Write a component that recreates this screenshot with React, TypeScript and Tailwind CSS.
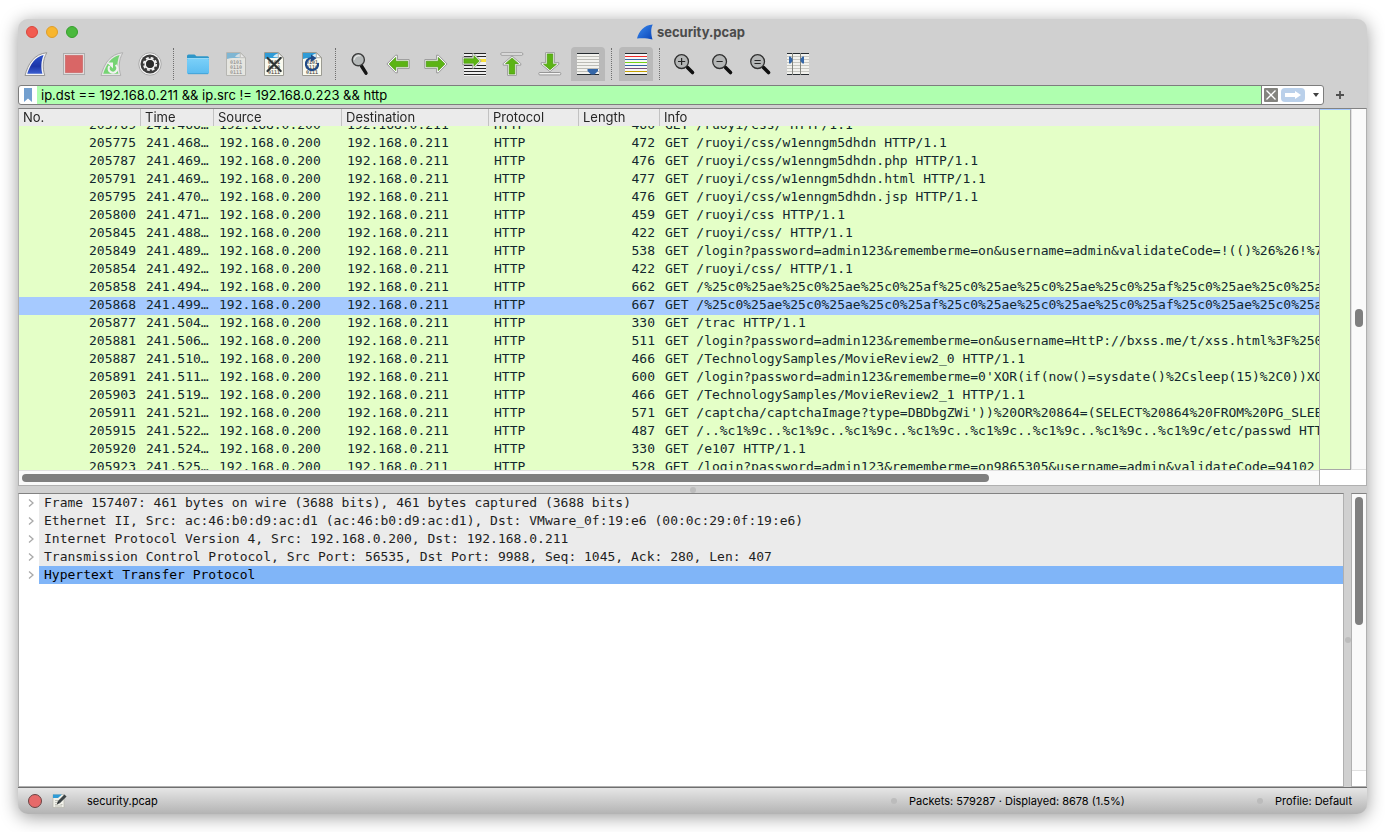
import { useLayoutEffect, useRef, useState } from "react";
import type { ReactNode } from "react";
import clsx from "clsx";

type Packet = {
  no: number;
  time: string;
  length: number;
  info: string;
};

const SRC = "192.168.0.200";
const DST = "192.168.0.211";

const packets: Packet[] = [
  { no: 205769, time: "241.466…", length: 460, info: "GET /ruoyi/css/ HTTP/1.1" },
  { no: 205775, time: "241.468…", length: 472, info: "GET /ruoyi/css/w1enngm5dhdn HTTP/1.1" },
  { no: 205787, time: "241.469…", length: 476, info: "GET /ruoyi/css/w1enngm5dhdn.php HTTP/1.1" },
  { no: 205791, time: "241.469…", length: 477, info: "GET /ruoyi/css/w1enngm5dhdn.html HTTP/1.1" },
  { no: 205795, time: "241.470…", length: 476, info: "GET /ruoyi/css/w1enngm5dhdn.jsp HTTP/1.1" },
  { no: 205800, time: "241.471…", length: 459, info: "GET /ruoyi/css HTTP/1.1" },
  { no: 205845, time: "241.488…", length: 422, info: "GET /ruoyi/css/ HTTP/1.1" },
  {
    no: 205849,
    time: "241.489…",
    length: 538,
    info: "GET /login?password=admin123&rememberme=on&username=admin&validateCode=!(()%26%26!%7C",
  },
  { no: 205854, time: "241.492…", length: 422, info: "GET /ruoyi/css/ HTTP/1.1" },
  {
    no: 205858,
    time: "241.494…",
    length: 662,
    info: "GET /%25c0%25ae%25c0%25ae%25c0%25af%25c0%25ae%25c0%25ae%25c0%25af%25c0%25ae%25c0%25ae",
  },
  {
    no: 205868,
    time: "241.499…",
    length: 667,
    info: "GET /%25c0%25ae%25c0%25ae%25c0%25af%25c0%25ae%25c0%25ae%25c0%25af%25c0%25ae%25c0%25ae",
  },
  { no: 205877, time: "241.504…", length: 330, info: "GET /trac HTTP/1.1" },
  {
    no: 205881,
    time: "241.506…",
    length: 511,
    info: "GET /login?password=admin123&rememberme=on&username=HttP://bxss.me/t/xss.html%3F%2500",
  },
  { no: 205887, time: "241.510…", length: 466, info: "GET /TechnologySamples/MovieReview2_0 HTTP/1.1" },
  {
    no: 205891,
    time: "241.511…",
    length: 600,
    info: "GET /login?password=admin123&rememberme=0'XOR(if(now()=sysdate()%2Csleep(15)%2C0))XOR",
  },
  { no: 205903, time: "241.519…", length: 466, info: "GET /TechnologySamples/MovieReview2_1 HTTP/1.1" },
  {
    no: 205911,
    time: "241.521…",
    length: 571,
    info: "GET /captcha/captchaImage?type=DBDbgZWi'))%20OR%20864=(SELECT%20864%20FROM%20PG_SLEEP",
  },
  {
    no: 205915,
    time: "241.522…",
    length: 487,
    info: "GET /..%c1%9c..%c1%9c..%c1%9c..%c1%9c..%c1%9c..%c1%9c..%c1%9c..%c1%9c/etc/passwd HTTP/1.1",
  },
  { no: 205920, time: "241.524…", length: 330, info: "GET /e107 HTTP/1.1" },
  {
    no: 205923,
    time: "241.525…",
    length: 528,
    info: "GET /login?password=admin123&rememberme=on9865305&username=admin&validateCode=94102",
  },
];

const columns = [
  { label: "No.", width: "w-[122px]" },
  { label: "Time", width: "w-[73px]" },
  { label: "Source", width: "w-[128px]" },
  { label: "Destination", width: "w-[147px]" },
  { label: "Protocol", width: "w-[90px]" },
  { label: "Length", width: "w-[81px]" },
  { label: "Info", width: "" },
];

const layers = [
  "Frame 157407: 461 bytes on wire (3688 bits), 461 bytes captured (3688 bits)",
  "Ethernet II, Src: ac:46:b0:d9:ac:d1 (ac:46:b0:d9:ac:d1), Dst: VMware_0f:19:e6 (00:0c:29:0f:19:e6)",
  "Internet Protocol Version 4, Src: 192.168.0.200, Dst: 192.168.0.211",
  "Transmission Control Protocol, Src Port: 56535, Dst Port: 9988, Seq: 1045, Ack: 280, Len: 407",
  "Hypertext Transfer Protocol",
];

const FIN = "M1 23.5C4 12 10 2 22.8 0.7C18.6 8 18.4 16 20.8 23.5Z";
const FIN_INNER = "M3.2 21.7C6.5 12 11 5 19.6 3C17 9 16.8 16 18.4 21.7Z";

function Icon({ children }: { children: ReactNode }) {
  return (
    <svg viewBox="0 0 24 24" className="size-6 shrink-0" aria-hidden="true">
      {children}
    </svg>
  );
}

function StartIcon() {
  return (
    <Icon>
      <defs>
        <linearGradient id="fin" x1="0" y1="0" x2="0" y2="1">
          <stop offset="0" stopColor="#2a50cc" />
          <stop offset="0.6" stopColor="#1c35a8" />
          <stop offset="1" stopColor="#3a5ed0" />
        </linearGradient>
      </defs>
      <path d={FIN} fill="#f4f4f4" stroke="#8e8e8e" strokeWidth="0.9" />
      <path d={FIN_INNER} fill="url(#fin)" />
    </Icon>
  );
}

function StopIcon() {
  return (
    <Icon>
      <rect x="1.5" y="1.5" width="21" height="21" fill="#e2dcdc" stroke="#adadad" />
      <rect x="3.5" y="3.5" width="17" height="17" fill="#d96666" stroke="#c65a5a" strokeWidth="0.6" />
    </Icon>
  );
}

function RestartIcon() {
  return (
    <Icon>
      <path d={FIN} fill="#e6e6e6" stroke="#adadad" strokeWidth="0.9" />
      <path d={FIN_INNER} fill="#76d474" />
      <path d="M9.4 14A4.3 4.3 0 1 0 15.6 13" fill="none" stroke="#f2f2f2" strokeWidth="2.2" />
      <path d="M6.8 10.5H13V16.5Z" fill="#f2f2f2" />
    </Icon>
  );
}

function OptionsIcon() {
  return (
    <Icon>
      <circle cx="12" cy="12" r="11.2" fill="#f5f5f5" stroke="#9a9a9a" strokeWidth="0.8" />
      <circle cx="12" cy="12" r="9.5" fill="#3b3b3b" />
      <circle cx="12" cy="12" r="6.2" fill="none" stroke="#f5f5f5" strokeWidth="1.8" strokeDasharray="2.8 2.07" />
      <circle cx="12" cy="12" r="4.7" fill="none" stroke="#f5f5f5" strokeWidth="1.8" />
      <circle cx="12" cy="12" r="3.9" fill="#2b2b2b" />
    </Icon>
  );
}

function FolderIcon() {
  return (
    <Icon>
      <defs>
        <linearGradient id="folder" x1="0" y1="0" x2="0" y2="1">
          <stop offset="0" stopColor="#7bd0f9" />
          <stop offset="1" stopColor="#5bbcf0" />
        </linearGradient>
      </defs>
      <path d="M1 4a1.5 1.5 0 0 1 1.5-1.500H8.500l2 1.800H21.500A1.500 1.500 0 0 1 23 5.800V9H1Z" fill="#2e96c8" />
      <rect x="1" y="6.5" width="22" height="15.5" rx="1.5" fill="url(#folder)" />
      <path d="M1 6.5H23" stroke="#a8e2fc" strokeWidth="0.8" />
      <path d="M2 21.7H22" stroke="#3f9fd4" strokeWidth="0.9" />
    </Icon>
  );
}

function Doc({ faded, children }: { faded?: boolean; children?: ReactNode }) {
  return (
    <Icon>
      <g opacity={faded ? 0.5 : 1}>
        <path d="M2.500 0.5H16.5L21.500 5.500V23.500H2.500Z" fill="#fafaef" stroke="#9b9b93" />
        <path d="M3 1H16V6H9Q6 6 3 7Z" fill="#2f9bd6" />
        <path d="M11 5C12 3 14 2 16 1.5V5.5Z" fill="#d4ecf8" />
        <path d="M16.3 0.8V5.7H21.2Z" fill="#fff" stroke="#9b9b93" strokeWidth="0.8" />
        <g fontFamily="DejaVu Sans Mono, monospace" fontSize="5" fontWeight="bold" fill="#66665f">
          <text x="6" y="12">0101</text>
          <text x="6" y="17">0110</text>
          <text x="6" y="22">0111</text>
        </g>
      </g>
      {children}
    </Icon>
  );
}

function FindIcon() {
  return (
    <Icon>
      <path d="M13.5 14L18 21.2" stroke="#151515" strokeWidth="3.4" strokeLinecap="round" />
      <circle cx="10.3" cy="7.7" r="6.1" fill="#b4b8b8" stroke="#3a3a3a" strokeWidth="1.4" />
      <path d="M6.3 7.7A4.3 4.3 0 0 1 12.500 4" fill="none" stroke="#e8e8e8" strokeWidth="1.2" />
    </Icon>
  );
}

function Arrow({ turn }: { turn: number }) {
  return (
    <g transform={`rotate(${turn} 12 12)`}>
      <path
        d="M0.9 12L9.6 3.2H11.4V7.6H23.2V16.4H11.4V20.8H9.6Z"
        fill="#f8f8f8"
        stroke="#8f8f8f"
        strokeWidth="0.9"
        strokeLinejoin="round"
      />
      <path d="M3.1 12L9.700 5.500V9.200H21.700V14.800H9.700V18.500Z" fill="#5cb414" stroke="#429405" strokeWidth="0.7" />
    </g>
  );
}

function BackIcon() {
  return <Icon><Arrow turn={0} /></Icon>;
}

function ForwardIcon() {
  return <Icon><Arrow turn={180} /></Icon>;
}

function GotoIcon() {
  return (
    <Icon>
      <rect x="2" y="1" width="22" height="23" fill="#f0f0f0" />
      <rect x="17" y="7" width="7" height="3" fill="#f8e03c" />
      <g fill="#252525">
        <rect x="2" y="1" width="22" height="1" />
        <rect x="2" y="4" width="22" height="1" />
        <rect x="2" y="13" width="22" height="1" />
        <rect x="2" y="16" width="22" height="1" />
        <rect x="2" y="19" width="22" height="1" />
        <rect x="2" y="22" width="22" height="1" />
      </g>
      <g transform="translate(0 -1) scale(0.83)">
        <Arrow turn={180} />
      </g>
    </Icon>
  );
}

function FirstIcon() {
  return (
    <Icon>
      <rect x="0.8" y="0.8" width="22" height="2.4" rx="1" fill="#f4f4f4" stroke="#8f8f8f" strokeWidth="0.9" />
      <g transform="translate(0 3.2) scale(1 0.87)">
        <Arrow turn={90} />
      </g>
    </Icon>
  );
}

function LastIcon() {
  return (
    <Icon>
      <rect x="0.8" y="20.5" width="22" height="2.4" rx="1" fill="#f4f4f4" stroke="#8f8f8f" strokeWidth="0.9" />
      <g transform="translate(0 0) scale(1 0.85)">
        <Arrow turn={270} />
      </g>
    </Icon>
  );
}

function AutoScrollIcon() {
  return (
    <Icon>
      <rect x="1" y="1" width="22" height="22" fill="#f2f2ee" />
      <g fill="#bcbcb6">
        <rect x="1" y="4" width="22" height="1" />
        <rect x="1" y="7" width="22" height="1" />
        <rect x="1" y="10" width="22" height="1" />
        <rect x="1" y="13" width="22" height="1" />
        <rect x="1" y="16" width="22" height="1" />
        <rect x="1" y="19" width="22" height="1" />
      </g>
      <path d="M1 1.5H23M1 22.5H23" stroke="#252b30" />
      <path d="M11.5 17H22V19L18.500 22.500H15L11.500 19Z" fill="#3567a8" />
    </Icon>
  );
}

function ColorizeIcon() {
  const lines = ["#252b30", "#ef2929", "#3465a4", "#73d216", "#3465a4", "#75507b", "#c4a000", "#252b30"];
  return (
    <Icon>
      <rect x="1" y="1" width="22" height="22" fill="#f7f7f7" />
      {lines.map((c, i) => (
        <rect key={i} x="1" y={1 + i * 3} width="22" height="1" fill={c} />
      ))}
    </Icon>
  );
}

function ZoomIcon({ sign }: { sign: "in" | "out" | "reset" }) {
  return (
    <Icon>
      <path d="M15.5 15.500L20.500 20.500" stroke="#101010" strokeWidth="3.6" strokeLinecap="round" />
      <circle cx="9.6" cy="9.6" r="6.9" fill="#b4b6b6" stroke="#303030" strokeWidth="1.3" />
      <g stroke="#252525" strokeWidth="1.2">
        {sign === "in" && <path d="M6 9.5H13.200M9.600 6V13" />}
        {sign === "out" && <path d="M6.500 9.500H12.700" />}
        {sign === "reset" && <path d="M6.500 8.500H12.700M6.500 11.500H12.700" />}
      </g>
    </Icon>
  );
}

function ResizeColumnsIcon() {
  return (
    <Icon>
      <rect x="1" y="1" width="22" height="22" fill="#f2f2ee" />
      <g fill="#c6c6c0">
        <rect x="1" y="4" width="22" height="1" />
        <rect x="1" y="7" width="22" height="1" />
        <rect x="1" y="10" width="22" height="1" />
        <rect x="1" y="13" width="22" height="1" />
        <rect x="1" y="16" width="22" height="1" />
        <rect x="1" y="19" width="22" height="1" />
      </g>
      <path d="M1 1.5H23M1 22.5H23" stroke="#252b30" />
      <path d="M6.500 1V23M14.500 1V23" stroke="#83857f" />
      <path d="M3 4.5H4.500L6.500 7V9L4.500 11.500H3ZM18 4.500H16.500L14.500 7V9L16.500 11.500H18Z" fill="#3567a8" />
    </Icon>
  );
}

function ToolButton({ label, active, children }: { label: string; active?: boolean; children: ReactNode }) {
  return (
    <button
      type="button"
      aria-label={label}
      title={label}
      className={clsx(
        "flex size-[34px] shrink-0 items-center justify-center rounded-t",
        active && "bg-[#b9b9b9]",
      )}
    >
      {children}
    </button>
  );
}

function Separator() {
  return (
    <div className="w-[6px] shrink-0 pl-[2px]">
      <div className="h-8 border-l border-dotted border-[#6f6f6f]" />
    </div>
  );
}

function TitleBar() {
  return (
    <div className="grid h-[25px] shrink-0 grid-cols-[1fr_auto_1fr] items-center">
      <div className="flex gap-2 pl-2">
        <button type="button" aria-label="Close" className="size-3 rounded-full border border-[#d9473c] bg-[#f25c51]" />
        <button type="button" aria-label="Minimize" className="size-3 rounded-full border border-[#dd9d2b] bg-[#f8b62f]" />
        <button type="button" aria-label="Zoom" className="size-3 rounded-full border border-[#379e2e] bg-[#4ab93d]" />
      </div>
      <h1 className="flex items-center gap-1 pr-[3px] text-[13px] leading-4 font-bold text-[#4b4b4b]">
        <svg viewBox="0 0 16 16" className="size-4" aria-hidden="true">
          <defs>
            <linearGradient id="title-fin" x1="0" y1="0" x2="1" y2="1">
              <stop offset="0" stopColor="#3b8cf0" />
              <stop offset="1" stopColor="#0b45b8" />
            </linearGradient>
          </defs>
          <path d="M0 14.5C2 7 7 1 15.8 0.5C13.5 4.500 14 10 15.500 15.500C10 14 5 14 0 14.500Z" fill="url(#title-fin)" />
        </svg>
        security.pcap
      </h1>
    </div>
  );
}

function Toolbar() {
  return (
    <div className="flex h-[40px] shrink-0 items-center gap-1 px-px" role="toolbar" aria-label="Main toolbar">
      <ToolButton label="Start capture"><StartIcon /></ToolButton>
      <ToolButton label="Stop capture"><StopIcon /></ToolButton>
      <ToolButton label="Restart capture"><RestartIcon /></ToolButton>
      <ToolButton label="Capture options"><OptionsIcon /></ToolButton>
      <Separator />
      <ToolButton label="Open file"><FolderIcon /></ToolButton>
      <ToolButton label="Save file"><Doc faded /></ToolButton>
      <ToolButton label="Close file">
        <Doc>
          <path d="M5.5 6L18.700 19M18.700 6L5.500 19" stroke="#2e3436" strokeWidth="2.2" strokeLinecap="round" />
        </Doc>
      </ToolButton>
      <ToolButton label="Reload file">
        <Doc>
          <path d="M11 6.200A6 6 0 1 0 18 11" fill="none" stroke="#204a87" strokeWidth="2.2" />
          <path d="M11 2.500L16.500 6.200L11 10Z" fill="#204a87" />
        </Doc>
      </ToolButton>
      <Separator />
      <ToolButton label="Find packet"><FindIcon /></ToolButton>
      <ToolButton label="Previous packet"><BackIcon /></ToolButton>
      <ToolButton label="Next packet"><ForwardIcon /></ToolButton>
      <ToolButton label="Go to packet"><GotoIcon /></ToolButton>
      <ToolButton label="First packet"><FirstIcon /></ToolButton>
      <ToolButton label="Last packet"><LastIcon /></ToolButton>
      <ToolButton label="Auto scroll" active><AutoScrollIcon /></ToolButton>
      <Separator />
      <ToolButton label="Colorize" active><ColorizeIcon /></ToolButton>
      <Separator />
      <ToolButton label="Zoom in"><ZoomIcon sign="in" /></ToolButton>
      <ToolButton label="Zoom out"><ZoomIcon sign="out" /></ToolButton>
      <ToolButton label="Normal size"><ZoomIcon sign="reset" /></ToolButton>
      <ToolButton label="Resize columns"><ResizeColumnsIcon /></ToolButton>
    </div>
  );
}

function FilterBar() {
  const [filter, setFilter] = useState("ip.dst == 192.168.0.211 && ip.src != 192.168.0.223 && http");
  return (
    <div className="flex h-[24px] shrink-0 items-start pt-px">
      <div className="flex h-5 min-w-0 flex-1 items-center overflow-hidden rounded-[3px] border border-[#7d7d7d] bg-white">
        <button type="button" aria-label="Bookmarks" className="flex w-[18px] shrink-0 justify-center">
          <svg viewBox="0 0 8 14" className="h-[14px] w-2" aria-hidden="true">
            <path d="M0 0H8V14L4 10.5L0 14Z" fill="#729fcf" />
          </svg>
        </button>
        <input
          aria-label="Display filter"
          value={filter}
          onChange={(e) => setFilter(e.target.value)}
          className="h-full min-w-0 flex-1 border-r border-[#7d7d7d] bg-[#afffaf] px-1 text-[13px] leading-4 text-black outline-none"
        />
        <div className="flex w-[61px] shrink-0 items-center pl-[2px]">
          <button
            type="button"
            aria-label="Clear filter"
            onClick={() => setFilter("")}
            className="flex size-[14px] items-center justify-center rounded-[1px] bg-[#84847f]"
          >
            <svg viewBox="0 0 14 14" className="size-[14px]" aria-hidden="true">
              <path d="M2.5 2.5L11.500 11.500M11.500 2.500L2.500 11.500" stroke="#fff" strokeWidth="1.3" />
            </svg>
          </button>
          <button type="button" aria-label="Apply filter" className="ml-[3px] rounded-sm bg-[#bad0ea]">
            <svg viewBox="0 0 24 14" className="h-[14px] w-6" aria-hidden="true">
              <path d="M4 5H14V3L20 7L14 11V9H4Z" fill="#fff" />
            </svg>
          </button>
          <button type="button" aria-label="Recent filters" className="flex flex-1 justify-center pl-1">
            <svg viewBox="0 0 6 4" className="h-1 w-[6px]" aria-hidden="true">
              <path d="M0 0H6L3 4Z" fill="#404040" />
            </svg>
          </button>
        </div>
      </div>
      <button type="button" aria-label="Add filter button" className="flex h-5 w-[43px] shrink-0 items-center pl-3">
        <svg viewBox="0 0 8 8" className="size-2" aria-hidden="true">
          <path d="M4 0V8M0 4H8" stroke="#505050" strokeWidth="1.8" />
        </svg>
      </button>
    </div>
  );
}

function PacketList() {
  const [selected, setSelected] = useState(205868);
  const scroller = useRef<HTMLDivElement>(null);

  // the list opens half a row down
  useLayoutEffect(() => {
    if (scroller.current) scroller.current.scrollTop = 9;
  }, []);

  return (
    <section
      aria-label="Packet list"
      className="flex min-h-0 shrink basis-[378px] border border-[#b0b0b0] border-t-[#828282] bg-white"
    >
      <div className="flex min-w-0 flex-1 flex-col">
        <div ref={scroller} className="min-h-0 flex-1 overflow-x-hidden overflow-y-auto [scrollbar-width:none]">
          <table className="w-full table-fixed border-collapse">
            <thead className="sticky top-0 bg-[#ebebeb]">
              <tr className="h-[17px]">
                {columns.map((c) => (
                  <th key={c.label} scope="col" className={clsx("p-0 text-left font-normal", c.width)}>
                    <div
                      className={clsx(
                        "h-[17px] pl-1 text-[13px] leading-4 text-[#262626]",
                        c.label !== "Info" && "border-r border-[#c2c2c2]",
                      )}
                    >
                      {c.label}
                    </div>
                  </th>
                ))}
              </tr>
            </thead>
            <tbody className="bg-[#e4ffc7] align-top font-['DejaVu_Sans_Mono',monospace] text-[13px] leading-4 text-[#12272e]">
              {packets.map((p) => (
                <tr
                  key={p.no}
                  onClick={() => setSelected(p.no)}
                  className={clsx("h-[18px] whitespace-nowrap", p.no === selected && "bg-[#a6caff]")}
                >
                  <td className="px-[5px] py-0 text-right">{p.no}</td>
                  <td className="py-0 pl-[5px]">{p.time}</td>
                  <td className="px-[5px] py-0">{SRC}</td>
                  <td className="px-[5px] py-0">{DST}</td>
                  <td className="px-[5px] py-0">HTTP</td>
                  <td className="px-[5px] py-0 text-right">{p.length}</td>
                  <td className="overflow-hidden py-0 pl-[5px]">{p.info}</td>
                </tr>
              ))}
            </tbody>
          </table>
        </div>
        <div className="flex h-[15px] shrink-0 items-center border-t border-[#e0e0e0] bg-[#fafafa] px-[3px]">
          <div className="h-2 flex-[967] rounded-full bg-[#7f7f7f]" />
          <div className="flex-[327]" />
        </div>
      </div>
      <div className="flex w-8 shrink-0 flex-col border-l border-[#b0b0b0]">
        <div className="flex-1 border-t border-r border-b border-[#a8a8a8] border-t-[#a6caff] bg-[#e4ffc7]" />
        <div className="h-[15px] shrink-0" />
      </div>
      <div className="flex w-[15px] shrink-0 flex-col">
        <div className="flex flex-1 flex-col items-center border-b border-l border-[#e0e0e0] bg-[#fafafa]">
          <div className="flex-[200]" />
          <div className="h-[18px] w-2 rounded-full bg-[#7f7f7f]" />
          <div className="flex-[142]" />
        </div>
        <div className="h-[15px] shrink-0" />
      </div>
    </section>
  );
}

function PacketDetails() {
  const [selected, setSelected] = useState(layers.length - 1);
  return (
    <div className="flex min-h-0 flex-1">
      <section aria-label="Packet details" className="min-w-0 flex-1 border border-[#b0b0b0] border-t-[#828282] bg-white">
        <ul className="font-['DejaVu_Sans_Mono',monospace] text-[13px] leading-[18px] text-[#1e1e1e]">
          {layers.map((layer, i) => (
            <li key={layer} className="flex h-[18px]">
              <button type="button" aria-label="Expand" className="flex w-5 shrink-0 items-center pl-2">
                <svg viewBox="0 0 8 8" className="size-2" aria-hidden="true">
                  <path d="M2 0.5L6 4L2 7.500" fill="none" stroke="#a9a9a9" strokeWidth="1.3" />
                </svg>
              </button>
              <div
                onClick={() => setSelected(i)}
                className={clsx(
                  "min-w-0 flex-1 overflow-hidden pl-[5px] whitespace-nowrap",
                  i === selected ? "bg-[#80b5f8] text-black" : "bg-[#ebebeb]",
                )}
              >
                {layer}
              </div>
            </li>
          ))}
        </ul>
      </section>
      <div className="flex w-[7px] shrink-0 items-center justify-center">
        <div className="size-[6px] rounded-full bg-[#bcbcbc]" />
      </div>
      <div className="flex w-4 shrink-0 flex-col border border-[#b0b0b0] border-t-[#828282] bg-white">
        <div className="flex-1 border-b border-[#e0e0e0] bg-[#fafafa] px-[3px] pt-[3px]">
          <div className="h-[47%] w-2 rounded-full bg-[#7f7f7f]" />
        </div>
        <div className="h-[15px] shrink-0" />
      </div>
    </div>
  );
}

function StatusBar() {
  return (
    <footer className="flex h-[27px] shrink-0 items-center border-t border-[#6f6f6f] bg-linear-to-b from-[#e6e6e6] to-[#b3b3b3] pr-[15px] pl-[10px] text-[11px] leading-4 text-black">
      <button type="button" aria-label="Expert information" className="size-[14px] rounded-full border border-[#6a4444] bg-[#e66a6a]" />
      <button type="button" aria-label="Capture comments" className="ml-[10px]">
        <svg viewBox="0 0 16 16" className="size-4" aria-hidden="true">
          <path d="M1 1.5H12V14.500H1Z" fill="#f1f1ea" stroke="#b5b5ad" strokeWidth="0.7" />
          <path d="M1 1.5H10L6 5H1Z" fill="#2f9bd6" />
          <path d="M3 7.5H6M3 9.500H5M3 11.500H6M8.500 11.500H10.500M3 13H10" stroke="#aaaaa2" strokeWidth="0.7" />
          <path d="M7 9L13.500 2.500" stroke="#3d4446" strokeWidth="3" />
          <path d="M4.800 11.200L6 7.800L8.200 10Z" fill="#22282a" />
        </svg>
      </button>
      <span className="ml-[19px] flex-1">security.pcap</span>
      <span className="size-[6px] rounded-full bg-[#bcbcbc]" />
      <span className="ml-3 w-[348px]">Packets: 579287 · Displayed: 8678 (1.5%)</span>
      <span className="size-[6px] rounded-full bg-[#bcbcbc]" />
      <span className="ml-3">Profile: Default</span>
    </footer>
  );
}

export default function App() {
  return (
    <div className="flex h-screen bg-white px-[18px] pt-[19px] pb-[18px] font-['Inter',sans-serif]">
      <main className="flex min-w-0 flex-1 flex-col overflow-hidden rounded-[10px] bg-[#d0d0d0] shadow-[0_3px_18px_rgba(0,0,0,0.4)]">
        <TitleBar />
        <Toolbar />
        <FilterBar />
        <PacketList />
        <div className="flex h-[7px] shrink-0 items-center justify-center">
          <div className="size-[6px] rounded-full bg-[#bcbcbc]" />
        </div>
        <PacketDetails />
        <StatusBar />
      </main>
    </div>
  );
}
